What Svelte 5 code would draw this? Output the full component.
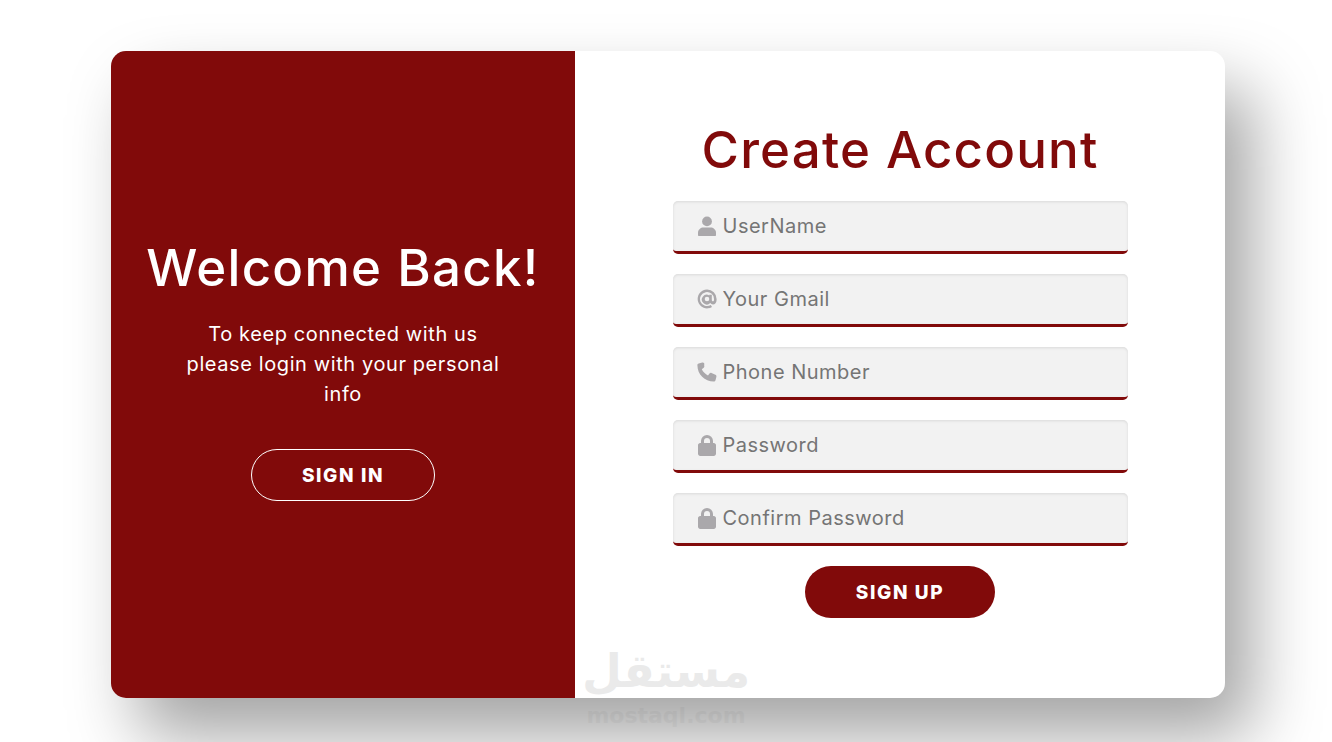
<script lang="ts">
	type Field = { label: string; icon: 'user' | 'at' | 'phone' | 'lock' }

	const fields: ReadonlyArray<Field> = [
		{ label: 'UserName', icon: 'user' },
		{ label: 'Your Gmail', icon: 'at' },
		{ label: 'Phone Number', icon: 'phone' },
		{ label: 'Password', icon: 'lock' },
		{ label: 'Confirm Password', icon: 'lock' }
	]
</script>

<div class="page">
	<main class="card">
		<section class="welcome">
			<h2 class="welcome__title">Welcome Back!</h2>
			<p class="welcome__text">To keep connected with us<br />please login with your personal<br />info</p>
			<button class="btn btn--ghost" type="button">SIGN IN</button>
		</section>
		<form class="form" onsubmit={(e) => e.preventDefault()}>
			<h1 class="form__title">Create Account</h1>
			{#each fields as f (f.label)}
				<label class="field">
					<span class="field__icon">
						{#if f.icon === 'user'}
							<svg viewBox="0 0 18 20" width="18" height="20"><circle cx="9" cy="5.4" r="4.9" /><path d="M0 19v-2.200C0 13.600 2.800 11.600 5.400 11.600h7.200c2.600 0 5.400 2 5.400 5.200V19c0 .6-.4 1-1 1H1c-.6 0-1-.4-1-1z" /></svg>
						{:else if f.icon === 'at'}
							<svg viewBox="0 0 20 20" width="20" height="20"><path d="M10 .6a9.400 9.400 0 1 0 5 17.400l-1.200-2.100A7 7 0 1 1 17 10v.9c0 .8-.5 1.300-1.100 1.300s-1.100-.5-1.100-1.300V5.700h-2.500v.7A4.900 4.900 0 1 0 13.300 14c.6.900 1.600 1.400 2.600 1.400 2.100 0 3.700-1.900 3.700-4.500V10A9.400 9.400 0 0 0 10 .6zm0 11.700a2.300 2.300 0 1 1 0-4.600 2.300 2.300 0 0 1 0 4.600z" /></svg>
						{:else if f.icon === 'phone'}
							<svg viewBox="0 0 20 20" width="20" height="20"><path d="M5.300.6 1.700 1.500C.9 1.700.4 2.400.4 3.200.4 12.300 7.700 19.600 16.800 19.600c.8 0 1.500-.5 1.700-1.300l.9-3.600c.2-.8-.2-1.600-1-2l-3.900-1.700c-.7-.3-1.500-.1-2 .5l-1.500 1.900c-2.700-1.300-4.900-3.500-6.200-6.200l1.900-1.500c.6-.5.800-1.300.5-2L7.300 1.600C6.900.8 6.100.4 5.300.6z" /></svg>
						{:else}
							<svg viewBox="0 0 18 21" width="18" height="21"><path d="M3 8V6a6 6 0 0 1 12 0v2h.8c1.200 0 2.200 1 2.200 2.200v8.600c0 1.200-1 2.200-2.200 2.200H2.200C1 21 0 20 0 18.800v-8.600C0 9 1 8 2.200 8H3zm3 0h6V6a3 3 0 0 0-6 0v2z" /></svg>
						{/if}
					</span>
					<input class="field__input" type="text" placeholder={f.label} />
				</label>
			{/each}
			<button class="btn btn--solid" type="submit">SIGN UP</button>
		</form>
		<div class="mark" aria-hidden="true">
			<span class="mark__ar" dir="rtl">مستقل</span>
			<span class="mark__en">mostaql.com</span>
		</div>
	</main>
</div>

<style>
	:global(body) {
		margin: 0;
		background: #fff;
	}

	.page {
		height: 742px;
		box-sizing: border-box;
		padding: 51px 107px 44px 111px;
		overflow: hidden;
		font-family: Inter, 'Liberation Sans', sans-serif;
	}

	.card {
		position: relative;
		display: flex;
		height: 647px;
		border-radius: 15px;
		background: #fff;
		box-shadow: 27px 38px 68px rgba(0, 0, 0, 0.36);
	}

	.welcome {
		flex: 0 0 464px;
		box-sizing: border-box;
		display: flex;
		flex-direction: column;
		align-items: center;
		padding-top: 186px;
		border-radius: 15px 0 0 15px;
		background: #810a0a;
		color: #fff;
		text-align: center;
	}

	.welcome__title {
		margin: 0;
		font-size: 51px;
		font-weight: 500;
		line-height: 62px;
		letter-spacing: 1.3px;
	}

	.welcome__text {
		margin: 20px 0 40px;
		font-size: 20px;
		font-weight: 400;
		line-height: 30px;
		letter-spacing: 0.6px;
	}

	.form {
		flex: 1;
		display: flex;
		flex-direction: column;
		align-items: center;
		padding-top: 68px;
	}

	.form__title {
		margin: 0 0 20px;
		font-size: 51px;
		font-weight: 500;
		line-height: 62px;
		letter-spacing: 1.2px;
		color: #810a0a;
	}

	.field {
		position: relative;
		display: block;
		width: 455px;
		height: 53px;
		margin-bottom: 20px;
	}

	.field__icon {
		position: absolute;
		left: 23px;
		top: 0;
		height: 50px;
		width: 22px;
		display: flex;
		align-items: center;
		justify-content: center;
		fill: #aaa8ab;
	}

	.field__input {
		width: 100%;
		height: 100%;
		box-sizing: border-box;
		padding: 0 12px 0 50px;
		border: none;
		border-bottom: 3px solid #810a0a;
		border-radius: 5px;
		outline: none;
		background: #f2f2f2;
		box-shadow: inset 0 1px 3px rgba(0, 0, 0, 0.1);
		font-family: inherit;
		font-size: 20px;
		letter-spacing: 0.5px;
		color: #333;
	}

	.field__input::placeholder {
		color: #757575;
		opacity: 1;
	}

	.btn {
		height: 52px;
		border-radius: 26px;
		font-family: inherit;
		font-size: 19px;
		font-weight: 800;
		letter-spacing: 1.6px;
		color: #fff;
		cursor: pointer;
	}

	.btn--ghost {
		width: 184px;
		border: 1px solid #fff;
		background: transparent;
	}

	.btn--solid {
		width: 190px;
		border: none;
		background: #810a0a;
	}

	.mark {
		position: absolute;
		left: 474px;
		top: 596px;
		width: 162px;
		display: flex;
		flex-direction: column;
		align-items: center;
		gap: 10px;
		pointer-events: none;
		color: #000;
		font-family: 'DejaVu Sans', sans-serif;
		font-weight: 700;
		white-space: nowrap;
	}

	.mark__ar {
		font-size: 46px;
		line-height: 48px;
		opacity: 0.08;
	}

	.mark__en {
		font-size: 22px;
		line-height: 22px;
		opacity: 0.03;
	}
</style>
